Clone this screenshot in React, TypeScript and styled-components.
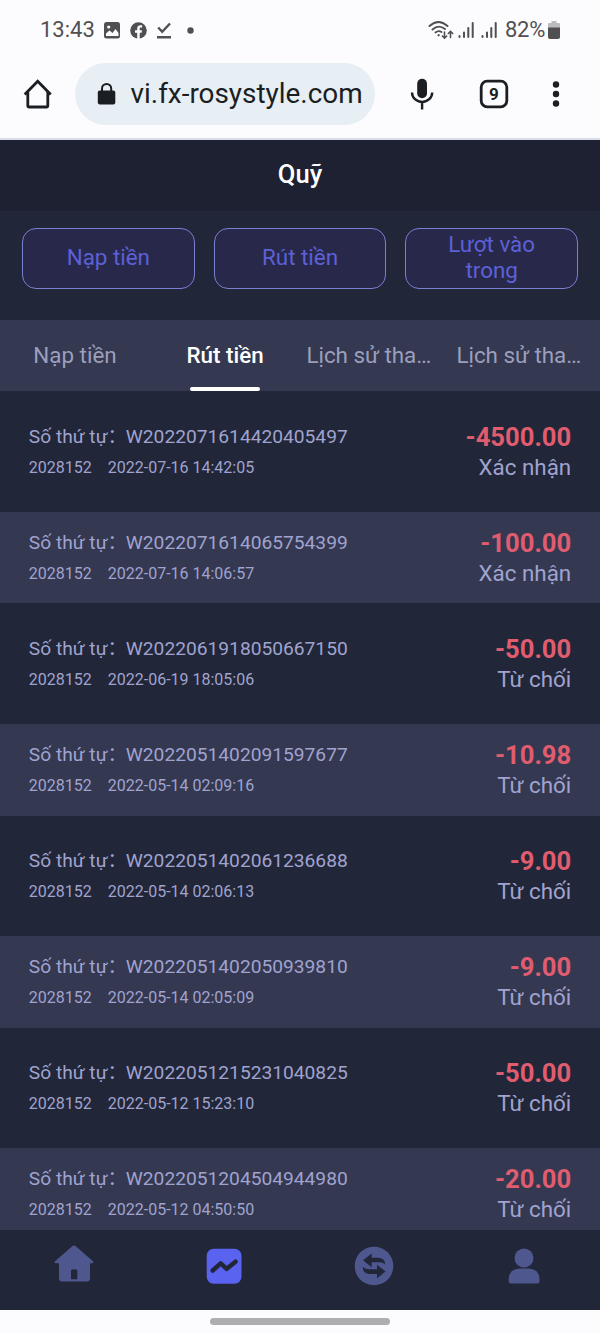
import React from "react";
import styled, { createGlobalStyle } from "styled-components";

const Global = createGlobalStyle`
  * { box-sizing: border-box; }
  body { margin: 0; background: #fcfcfe; font-family: Roboto, "Noto Sans CJK SC", sans-serif; }
`;

const Screen = styled.div`
  width: 600px;
  height: 1333px;
  display: flex;
  flex-direction: column;
  overflow: hidden;
  background: #212638;
`;

const StatusBar = styled.div`
  height: 60px;
  flex: none;
  display: flex;
  align-items: center;
  padding: 0 40px 0 40px;
  background: #fcfcfe;
  color: #505052;
  font-size: 22px;
  line-height: 60px;
`;

const Icon = styled.svg<{ $ml?: number }>`
  display: block;
  flex: none;
  margin-left: ${(p) => p.$ml ?? 0}px;
`;

const Clock = styled.span`
  width: 55px;
`;

const Spacer = styled.div`
  flex: 1;
`;

const Battery = styled.span`
  margin-left: 8px;
  width: 41px;
  letter-spacing: -0.3px;
  white-space: nowrap;
`;

const BrowserBar = styled.div`
  height: 80px;
  flex: none;
  display: flex;
  align-items: center;
  padding: 0 38px 10px 22px;
  background: #fcfcfe;
  border-bottom: 2px solid #d9dce6;
`;

const Address = styled.div`
  margin-left: 21px;
  width: 300px;
  height: 62px;
  border-radius: 31px;
  display: flex;
  align-items: center;
  padding-left: 22px;
  background: #e7eef4;
  color: #1b1e22;
  font-size: 27.9px;
  line-height: 66px;
  white-space: nowrap;
`;

const Url = styled.span`
  margin-left: 14.5px;
`;

const Header = styled.h1`
  height: 71px;
  flex: none;
  margin: 0;
  background: #1e2131;
  color: #fff;
  font-size: 25.6px;
  font-weight: 500;
  line-height: 69px;
  text-align: center;
`;

const Actions = styled.div`
  height: 109px;
  flex: none;
  display: flex;
  gap: 19px;
  padding: 16.5px 22px 31px;
`;

const Action = styled.button`
  flex: 1;
  display: flex;
  align-items: center;
  justify-content: center;
  padding: 0 30px 2px;
  border: 1px solid #7a7fd2;
  border-radius: 14px;
  background: #28294a;
  color: #5d60d8;
  font: 22.4px/26.5px Roboto, sans-serif;
  text-align: center;
`;

const Tabs = styled.div`
  height: 71px;
  flex: none;
  display: flex;
  background: #343851;
`;

const Tab = styled.div<{ $active?: boolean; $clipped?: boolean }>`
  width: 150px;
  display: flex;
  flex-direction: column;
  justify-content: space-between;
  padding: ${(p) => (p.$clipped ? "0 0 0 6.4px" : "0")};
  text-align: ${(p) => (p.$clipped ? "left" : "center")};
  color: ${(p) => (p.$active ? "#fff" : "#9c9fbc")};
  font-size: 22.4px;
  font-weight: ${(p) => (p.$active ? 500 : 400)};
  line-height: 70px;
  white-space: nowrap;
`;

const TabLabel = styled.span`
  height: 67px;
`;

const Underline = styled.div`
  width: 70px;
  height: 4px;
  align-self: center;
  border-radius: 2px;
  background: #fff;
`;

const List = styled.div`
  flex: 1;
  min-height: 0;
  overflow: hidden;
  display: flex;
  flex-direction: column;
  gap: 14.5px;
  padding-top: 14.8px;
`;

const Row = styled.div<{ $striped: boolean }>`
  height: 91.6px;
  flex: none;
  display: flex;
  justify-content: space-between;
  padding: 14.8px 28.8px;
  background: ${(p) => (p.$striped ? "#343851" : "#212638")};
  color: #a0a3cf;
  line-height: 31px;
  white-space: nowrap;
`;

const Order = styled.div`
  font-size: 19.2px;
`;

const OrderLabel = styled.span`
  margin-right: -0.9px;
`;

const Meta = styled.div`
  display: flex;
  gap: 16px;
  font-size: 16px;
`;

const Result = styled.div`
  text-align: right;
`;

const Amount = styled.div`
  color: #e05c6f;
  font-size: 25.6px;
  font-weight: 700;
  line-height: 32px;
`;

const Status = styled.div`
  font-size: 22.4px;
  line-height: 29px;
`;

const Nav = styled.div`
  height: 79.5px;
  flex: none;
  display: flex;
  background: #212638;
`;

const NavItem = styled.div`
  width: 150px;
  display: flex;
  justify-content: center;
  padding-top: 14px;
  padding-right: 1.4px;
`;

const Gesture = styled.div`
  height: 23.5px;
  flex: none;
  display: flex;
  justify-content: center;
  padding-top: 8.5px;
  background: #fcfcfe;
`;

const Handle = styled.div`
  width: 180px;
  height: 7px;
  border-radius: 3.5px;
  background: #aeaeb0;
`;

const rows = [
  ["W2022071614420405497", "2022-07-16 14:42:05", "-4500.00", "Xác nhận"],
  ["W2022071614065754399", "2022-07-16 14:06:57", "-100.00", "Xác nhận"],
  ["W2022061918050667150", "2022-06-19 18:05:06", "-50.00", "Từ chối"],
  ["W2022051402091597677", "2022-05-14 02:09:16", "-10.98", "Từ chối"],
  ["W2022051402061236688", "2022-05-14 02:06:13", "-9.00", "Từ chối"],
  ["W2022051402050939810", "2022-05-14 02:05:09", "-9.00", "Từ chối"],
  ["W2022051215231040825", "2022-05-12 15:23:10", "-50.00", "Từ chối"],
  ["W2022051204504944980", "2022-05-12 04:50:50", "-20.00", "Từ chối"],
];

const Signal = ({ ml }: { ml: number }) => (
  <Icon $ml={ml} width="16" height="18" viewBox="0 0 16 18" fill="none" stroke="#505052" strokeWidth="2" strokeLinecap="round">
    <path d="M1.500 15v1M6 11.500V16M10.300 7V16M14.700 2V16" />
  </Icon>
);

export default function App() {
  return (
    <Screen>
      <Global />
      <StatusBar>
        <Clock>13:43</Clock>
        <Icon $ml={9} width="16" height="17" viewBox="0 0 16 17">
          <rect width="16" height="16.500" rx="2.500" fill="#505052" />
          <circle cx="4.700" cy="5" r="1.600" fill="#fcfcfe" />
          <path d="M2 11.500l3.500-3 3 2.500 3-4 3 4V14H2z" fill="#fcfcfe" />
        </Icon>
        <Icon $ml={9.5} width="17" height="17" viewBox="0 0 17 17">
          <circle cx="8.500" cy="8.500" r="8.300" fill="#505052" />
          <path d="M7.200 17v-6.300H5V8.300h2.200V6.500c0-2.200 1.300-3.300 3.200-3.300l1.700.1v2.100h-1.200c-.9 0-1.200.5-1.200 1.200v1.700H12l-.4 2.400H9.700V17z" fill="#fcfcfe" />
        </Icon>
        <Icon $ml={9.5} width="16" height="17" viewBox="0 0 16 17" fill="none" stroke="#505052" strokeWidth="2.400">
          <path d="M2.200 5.500l4 4.300L14 1.500M1 15.300h14" />
        </Icon>
        <Icon $ml={15} width="7" height="7" viewBox="0 0 7 7">
          <circle cx="3.500" cy="3.500" r="3.200" fill="#505052" />
        </Icon>
        <Spacer />
        <Icon width="26" height="20" viewBox="0 0 26 20" fill="none" stroke="#505052" strokeWidth="1.900" strokeLinecap="round">
          <path d="M1.500 6Q10.500-2 19.500 6M4.500 9.500Q10.500 4 17 9M7.500 12.500Q10.500 10 13.500 12" />
          <circle cx="10.500" cy="15.200" r=".7" fill="#505052" strokeWidth="1" />
          <path d="M16.500 12V18M14.300 16l2.200 2.200 2.200-2.200M22.500 17.500v-6M20.300 13.500l2.200-2.200 2.200 2.200" strokeWidth="1.600" />
        </Icon>
        <Signal ml={4} />
        <Signal ml={7} />
        <Battery>82%</Battery>
        <Icon $ml={2} width="12" height="18" viewBox="0 0 12 18">
          <path d="M3.500 0h5v2H11q1 0 1 1v4H0V3q0-1 1-1h2.500z" fill="#bcbcbe" />
          <path d="M0 6.500h12V16q0 2-2 2H2q-2 0-2-2z" fill="#505052" />
        </Icon>
      </StatusBar>
      <BrowserBar>
        <Icon width="32" height="32" viewBox="0 0 32 32" fill="none" stroke="#1b1e22" strokeWidth="2.800">
          <path d="M2.700 16.500L15.700 3.200 28.700 16.500" />
          <path d="M5.800 14v13.500q0 1.500 1.500 1.500h17q1.500 0 1.500-1.500V14" />
        </Icon>
        <Address>
          <Icon width="19" height="24" viewBox="0 0 19 24">
            <rect x=".8" y="8.500" width="17.500" height="14" rx="2" fill="#1b1e22" />
            <path d="M5 10V6.500a4.600 4.600 0 0 1 9.200 0V10" fill="none" stroke="#1b1e22" strokeWidth="2" />
          </Icon>
          <Url>vi.fx-rosystyle.com</Url>
        </Address>
        <Icon $ml={35} width="24" height="32" viewBox="0 0 24 32">
          <rect x="7.200" y=".7" width="9.800" height="19.500" rx="4.900" fill="#1b1e22" />
          <path d="M2 14.500a10.100 9.500 0 0 0 20.200 0M12.100 24v7.500" fill="none" stroke="#1b1e22" strokeWidth="2.400" />
        </Icon>
        <Icon $ml={45} width="30" height="30" viewBox="0 0 30 30">
          <rect x="2.200" y="2.200" width="25.600" height="25.600" rx="6" fill="none" stroke="#1b1e22" strokeWidth="2.800" />
          <text x="15" y="20.700" textAnchor="middle" fontFamily="Roboto" fontWeight="700" fontSize="17" fill="#1b1e22">9</text>
        </Icon>
        <Icon $ml={43} width="8" height="28" viewBox="0 0 8 28" fill="#1b1e22">
          <circle cx="4" cy="4.500" r="3.200" />
          <circle cx="4" cy="14" r="3.200" />
          <circle cx="4" cy="23.500" r="3.200" />
        </Icon>
      </BrowserBar>
      <Header>Quỹ</Header>
      <Actions>
        <Action>Nạp tiền</Action>
        <Action>Rút tiền</Action>
        <Action>Lượt vào trong</Action>
      </Actions>
      <Tabs>
        <Tab><TabLabel>Nạp tiền</TabLabel></Tab>
        <Tab $active><TabLabel>Rút tiền</TabLabel><Underline /></Tab>
        <Tab $clipped><TabLabel>Lịch sử tha…</TabLabel></Tab>
        <Tab $clipped><TabLabel>Lịch sử tha…</TabLabel></Tab>
      </Tabs>
      <List>
        {rows.map(([id, time, amount, status], i) => (
          <Row key={id} $striped={i % 2 === 1}>
            <div>
              <Order><OrderLabel>Số thứ tự：</OrderLabel>{id}</Order>
              <Meta><span>2028152</span><span>{time}</span></Meta>
            </div>
            <Result>
              <Amount>{amount}</Amount>
              <Status>{status}</Status>
            </Result>
          </Row>
        ))}
      </List>
      <Nav>
        <NavItem>
          <Icon width="40" height="44" viewBox="0 0 40 44" fill="#4f578f">
            <path fillRule="evenodd" d="M18.500 2.100q1.500-1.400 3 0L39 17.200q1.200 2-.8 2H36V34.500q0 3-3 3H8q-3 0-3-3V19.200H1.800q-2 0-.8-2zM18.300 25.500q-1.300 0-1.300 1.300v8.400h6.300v-8.400q0-1.300-1.300-1.300z" />
          </Icon>
        </NavItem>
        <NavItem>
          <Icon width="40" height="44" viewBox="0 0 40 44">
            <rect x="2.700" y="4.700" width="34.800" height="35" rx="7" fill="#5a62f0" />
            <path d="M8.700 26.500L16.700 19.300 22.700 24.800 31.500 17.700" fill="none" stroke="#212638" strokeWidth="4.500" strokeLinecap="round" strokeLinejoin="round" />
          </Icon>
        </NavItem>
        <NavItem>
          <Icon width="40" height="44" viewBox="0 0 40 44">
            <circle cx="20" cy="22" r="19.300" fill="#4f578f" />
            <path d="M9 16.300L17.700 9.500v4.300H24q7 0 7 6.700-2-2.200-6-2.200h-7.300v5z" fill="#212638" />
            <path d="M31.500 27.500L23 34.300V30h-7q-7 0-7.300-7.200 2 2.400 6.300 2.400h8v-4.500z" fill="#212638" />
          </Icon>
        </NavItem>
        <NavItem>
          <Icon width="40" height="44" viewBox="0 0 40 44" fill="#4f578f">
            <circle cx="20" cy="14" r="9.500" />
            <path d="M4.700 37V36q0-11.500 12-11.500h6.800q12 0 12 11.500v1q0 2.500-2.500 2.500H7.200q-2.500 0-2.500-2.500z" />
          </Icon>
        </NavItem>
      </Nav>
      <Gesture><Handle /></Gesture>
    </Screen>
  );
}
